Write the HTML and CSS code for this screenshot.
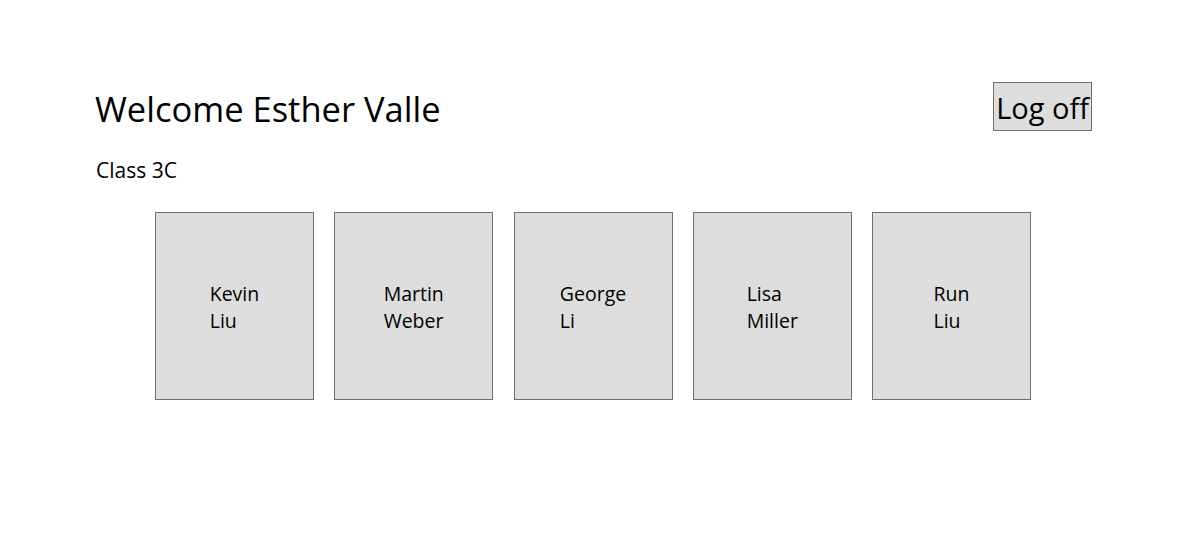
FILE: index.html
```html
<!DOCTYPE html>
<html lang="en">
<head>
<meta charset="utf-8">
<title>Class 3C</title>
<link rel="stylesheet" href="styles.css">
</head>
<body>
<div class="page">
  <header class="header">
    <h1 class="welcome">Welcome Esther Valle</h1>
    <button class="logoff" type="button">Log off</button>
  </header>
  <div class="class-name">Class 3C</div>
  <div class="students">
    <div class="card"><span class="name">Kevin Liu</span></div>
    <div class="card"><span class="name">Martin Weber</span></div>
    <div class="card"><span class="name">George Li</span></div>
    <div class="card"><span class="name">Lisa Miller</span></div>
    <div class="card"><span class="name">Run Liu</span></div>
  </div>
</div>
</body>
</html>
```
FILE: styles.css
```css
html, body {
  margin: 0;
  padding: 0;
  background: #ffffff;
}

body {
  font-family: "Open Sans", "Noto Sans", "Liberation Sans", sans-serif;
  color: #000000;
}

.page {
  padding: 82px 103px 0 93px;
}

.header {
  display: flex;
  align-items: center;
  justify-content: space-between;
  height: 49px;
}

.welcome {
  margin: 0 0 0 2px;
  padding-top: 4px;
  font-size: 34.5px;
  font-weight: 400;
  line-height: 45px;
}

.logoff {
  height: 49px;
  margin: 0;
  padding: 2px 2px 0;
  font-family: inherit;
  font-size: 29px;
  line-height: 45px;
  color: #000000;
  background: #dddddd;
  border: 1px solid #707070;
  border-radius: 0;
}

.class-name {
  margin: 26px 0 0 3px;
  font-size: 21px;
  line-height: 27px;
}

.students {
  display: flex;
  justify-content: center;
  gap: 20.25px;
  margin-top: 28px;
  padding-left: 1px;
}

.card {
  box-sizing: border-box;
  width: 159px;
  height: 188px;
  padding-top: 2px;
  display: flex;
  align-items: center;
  justify-content: center;
  background: #dddddd;
  border: 1px solid #707070;
}

.name {
  display: block;
  width: min-content;
  font-size: 19.5px;
  line-height: 27px;
  text-align: left;
}
```
